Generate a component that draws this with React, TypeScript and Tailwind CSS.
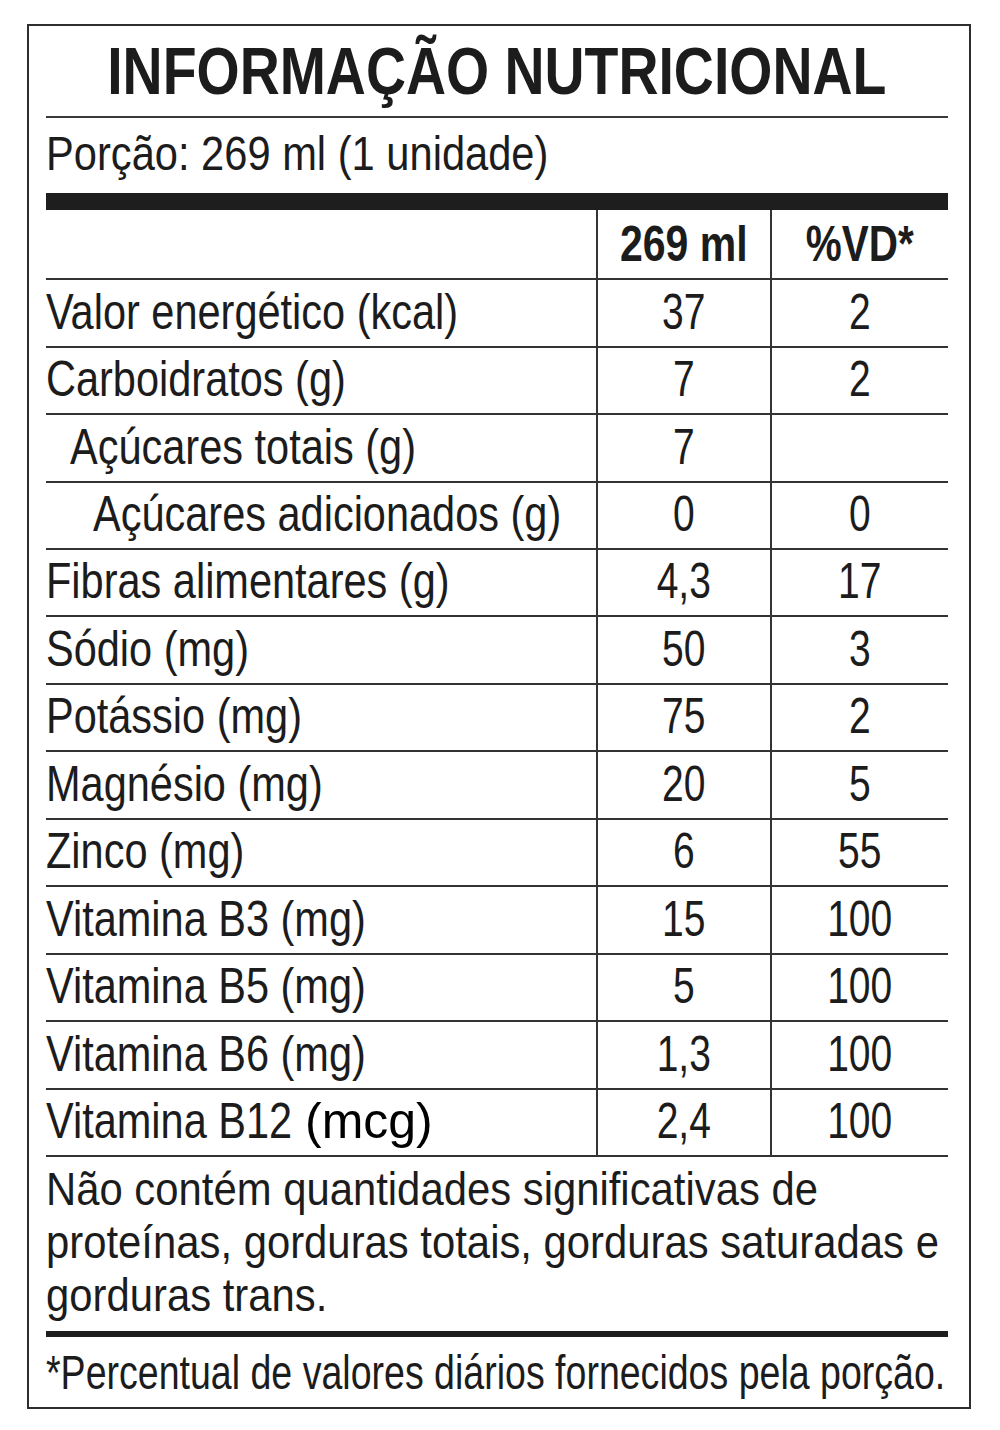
import React from "react";

type Row = { label: string; indent?: number; v1: string; v2: string; h: number; mcg?: boolean };

const rows: Row[] = [
  { label: "Valor energético (kcal)", v1: "37", v2: "2", h: 68 },
  { label: "Carboidratos (g)", v1: "7", v2: "2", h: 67 },
  { label: "Açúcares totais (g)", indent: 1, v1: "7", v2: "", h: 68 },
  { label: "Açúcares adicionados (g)", indent: 2, v1: "0", v2: "0", h: 67 },
  { label: "Fibras alimentares (g)", v1: "4,3", v2: "17", h: 67 },
  { label: "Sódio (mg)", v1: "50", v2: "3", h: 68 },
  { label: "Potássio (mg)", v1: "75", v2: "2", h: 67 },
  { label: "Magnésio (mg)", v1: "20", v2: "5", h: 68 },
  { label: "Zinco (mg)", v1: "6", v2: "55", h: 67 },
  { label: "Vitamina B3 (mg)", v1: "15", v2: "100", h: 68 },
  { label: "Vitamina B5 (mg)", v1: "5", v2: "100", h: 67 },
  { label: "Vitamina B6 (mg)", v1: "1,3", v2: "100", h: 68 },
  { label: "Vitamina B12", v1: "2,4", v2: "100", h: 67, mcg: true },
];

function Val({ children }: { children: React.ReactNode }) {
  return (
    <span className="inline-block whitespace-nowrap origin-center scale-x-[0.78] text-[50px] leading-none">
      {children}
    </span>
  );
}

export default function App() {
  return (
    <div className="w-[1000px] h-[1430px] bg-white pt-[24px] pl-[27px] font-['Liberation_Sans','Arial',sans-serif] text-[#1c1c1c] overflow-hidden">
      <div className="w-[944px] h-[1385px] border-2 border-[#2e2e2e] pl-[17px] pr-[21px] flex flex-col">
        {/* Title */}
        <div className="h-[92px] shrink-0 flex items-center justify-center border-b-2 border-[#3a3a3a]">
          <span className="inline-block whitespace-nowrap origin-center scale-x-[0.84] text-[66px] font-bold leading-none">
            INFORMAÇÃO NUTRICIONAL
          </span>
        </div>
        {/* Porção */}
        <div className="h-[75px] shrink-0 flex items-center pb-[4px]">
          <span className="inline-block whitespace-nowrap origin-left scale-x-[0.85] text-[49px] leading-none">
            Porção: 269 ml (1 unidade)
          </span>
        </div>
        {/* Black bar */}
        <div className="h-[17px] shrink-0 bg-[#1e1e1e]" />
        {/* Header */}
        <div className="h-[70px] shrink-0 flex border-b-2 border-[#333]">
          <div className="w-[550px] shrink-0" />
          <div className="w-[174px] shrink-0 border-l-2 border-[#333] flex items-center justify-center">
            <span className="inline-block whitespace-nowrap origin-center scale-x-[0.82] text-[50px] font-bold leading-none">
              269 ml
            </span>
          </div>
          <div className="flex-1 border-l-2 border-[#333] flex items-center justify-center">
            <span className="inline-block whitespace-nowrap origin-center scale-x-[0.81] text-[50px] font-bold leading-none">
              %VD*
            </span>
          </div>
        </div>
        {/* Rows */}
        {rows.map((r, i) => (
          <div key={i} className="flex shrink-0 border-b-2 border-[#333]" style={{ height: r.h }}>
            <div
              className={
                "w-[550px] shrink-0 flex items-center text-[50px] leading-none whitespace-nowrap pb-[3px] " +
                (r.indent === 1 ? "pl-[24px]" : r.indent === 2 ? "pl-[47px]" : "")
              }
            >
              {r.mcg ? (
                <>
                  <span className="inline-block w-[247px] whitespace-nowrap">
                    <span className="inline-block whitespace-nowrap origin-left scale-x-[0.83]">{r.label}</span>
                  </span>
                  <span className="ml-[12px] text-black">(mcg)</span>
                </>
              ) : (
                <span className="inline-block whitespace-nowrap origin-left scale-x-[0.83]">{r.label}</span>
              )}
            </div>
            <div className="w-[174px] shrink-0 border-l-2 border-[#333] flex items-center justify-center pb-[3px]">
              <Val>{r.v1}</Val>
            </div>
            <div className="flex-1 border-l-2 border-[#333] flex items-center justify-center pb-[3px]">
              <Val>{r.v2}</Val>
            </div>
          </div>
        ))}
        {/* Footer note */}
        <div className="h-[174px] shrink-0 pt-[5px]">
          <div className="origin-left scale-x-[0.89] text-[47px] leading-[53px] whitespace-nowrap">
            <div>Não contém quantidades significativas de</div>
            <div>proteínas, gorduras totais, gorduras saturadas e</div>
            <div>gorduras trans.</div>
          </div>
        </div>
        <div className="h-[6px] shrink-0 bg-[#1e1e1e]" />
        <div className="flex-1 flex items-center">
          <span className="inline-block whitespace-nowrap origin-left scale-x-[0.766] text-[49px] leading-none">
            *Percentual de valores diários fornecidos pela porção.
          </span>
        </div>
      </div>
    </div>
  );
}
